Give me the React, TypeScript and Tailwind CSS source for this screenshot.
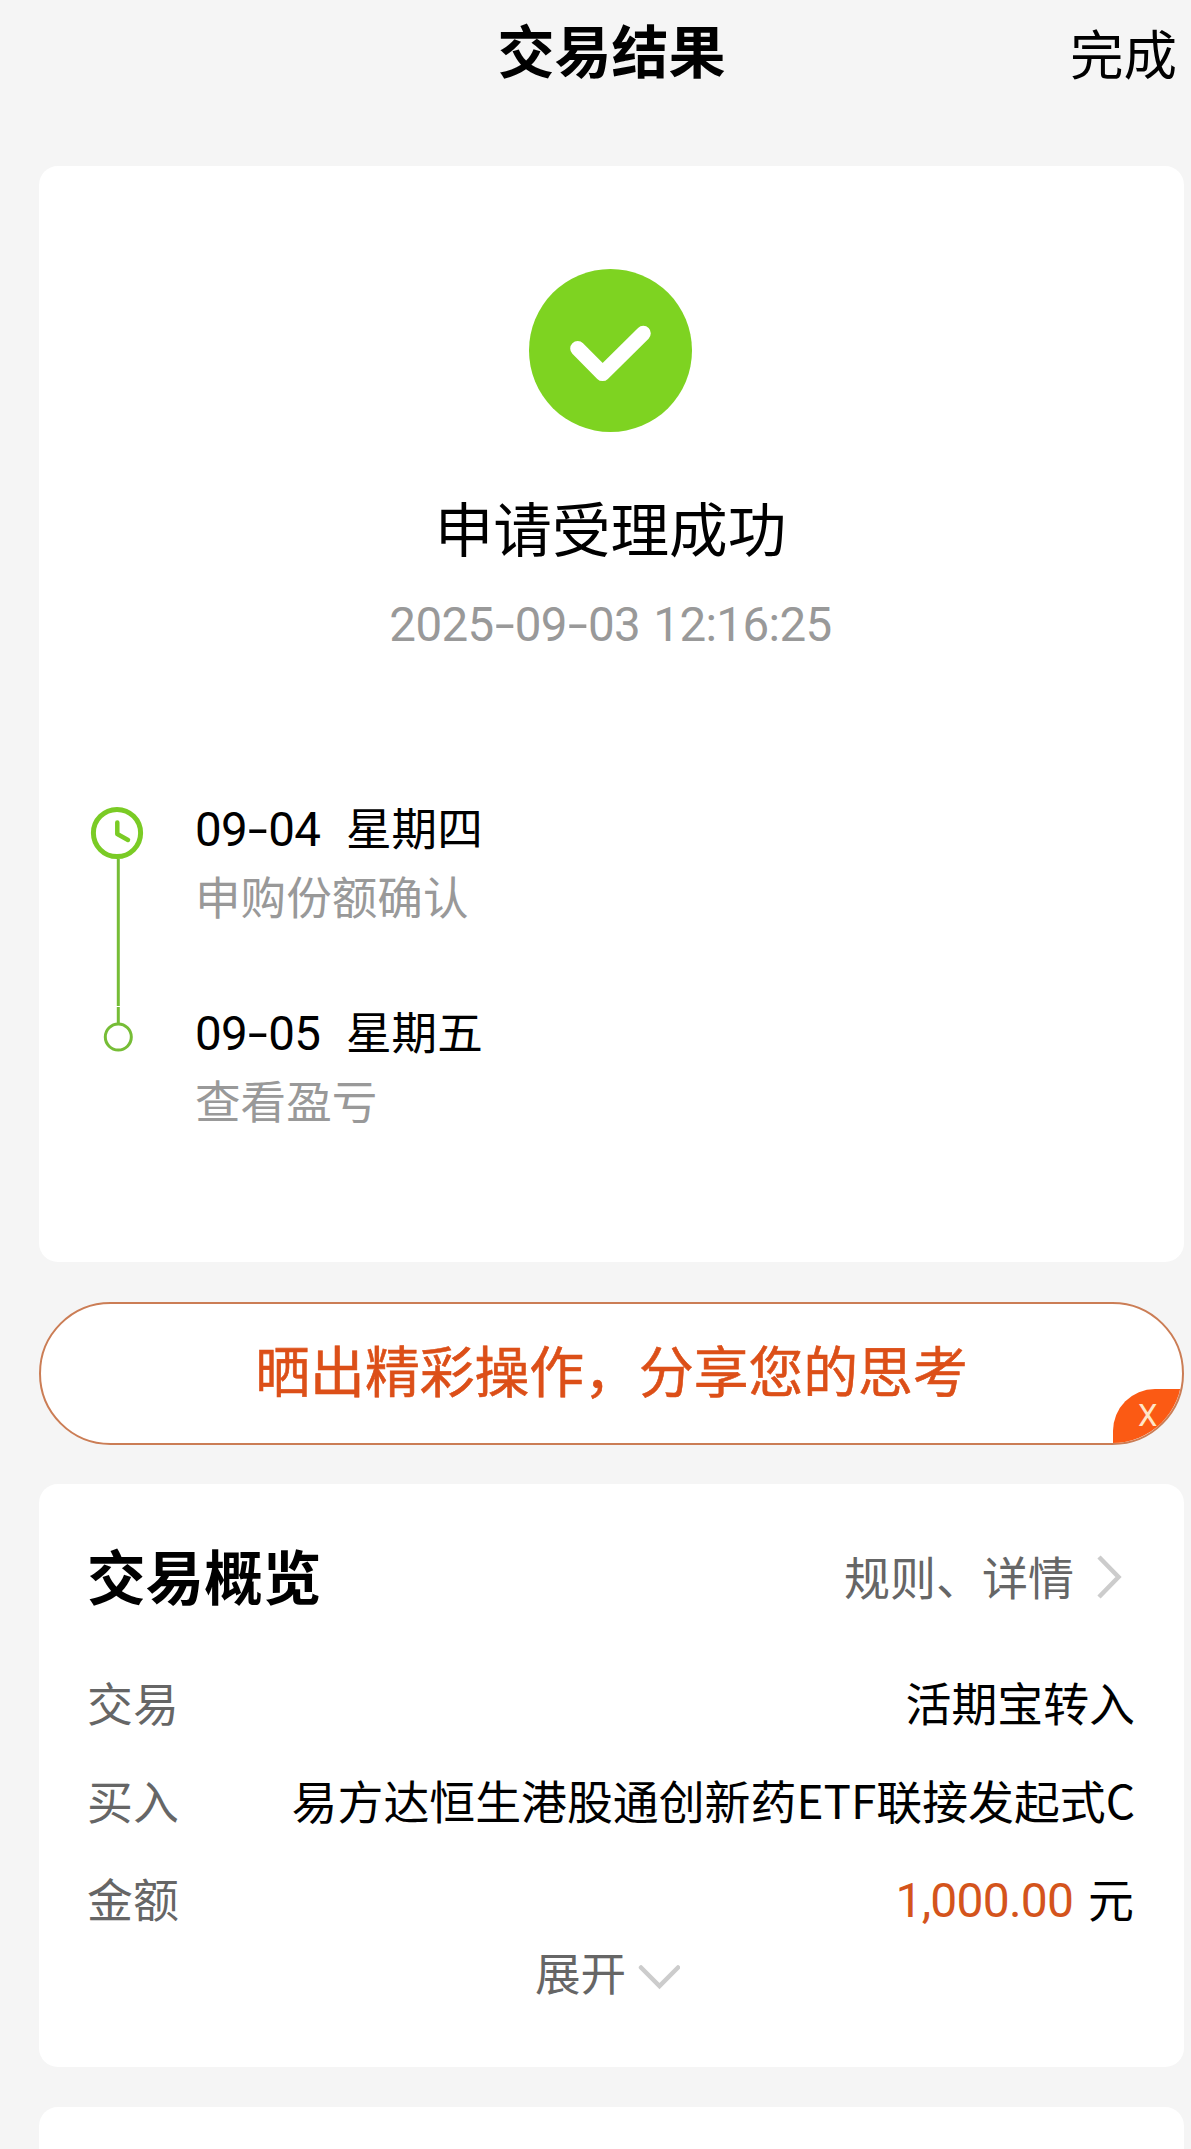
import { Fragment } from "react";

interface TimelineItem {
  date: string;
  weekday: string;
  note: string;
}

const timeline: TimelineItem[] = [
  { date: "09-04", weekday: "星期四", note: "申购份额确认" },
  { date: "09-05", weekday: "星期五", note: "查看盈亏" },
];

// Digits with wide hyphens between the parts
function DateText({ value }: { value: string }) {
  return (
    <span className="font-[Roboto] text-[47.5px] tracking-[-0.6px] whitespace-nowrap">
      {value.split("-").map((part, i) => (
        <Fragment key={i}>
          {i > 0 && <span className="inline-block w-[21px] scale-x-150 text-center">-</span>}
          {part}
        </Fragment>
      ))}
    </span>
  );
}

function SuccessIcon() {
  return (
    <svg className="h-[163px] w-[163px]" viewBox="0 0 163 163" fill="none">
      <circle cx="81.5" cy="81.5" r="81.5" fill="#7ed321" />
      <path
        d="M48.7 79.5 L73.6 104.6 L114.3 64.3"
        stroke="#fff"
        strokeWidth="15"
        strokeLinecap="round"
        strokeLinejoin="round"
      />
    </svg>
  );
}

function TimelineRail() {
  return (
    <svg className="mt-[10px] h-[246px] w-[54px] shrink-0" viewBox="0 0 54 246" fill="none">
      <circle cx="27" cy="27" r="23.6" stroke="#7acb25" strokeWidth="5" />
      <path
        d="M27.3 16.5 V28 L38 34"
        stroke="#7acb25"
        strokeWidth="4.5"
        strokeLinecap="round"
        strokeLinejoin="round"
      />
      <path d="M28.3 53 V200 M28.3 201 V218" stroke="#76bd36" strokeWidth="3" />
      <circle cx="28.3" cy="231" r="13" stroke="#76bd36" strokeWidth="3" />
    </svg>
  );
}

function Header() {
  return (
    <header className="grid h-[166px] grid-cols-[1fr_auto_1fr] items-start">
      <span />
      <h1 className="mt-[8px] text-[57px] leading-[80px] font-bold">交易结果</h1>
      <button className="mt-[12px] mr-[7px] justify-self-end text-[53.5px] leading-[80px]">完成</button>
    </header>
  );
}

function ResultCard() {
  return (
    <section className="flex h-[1096px] flex-col rounded-[19px] bg-white pt-[103px]">
      <div className="flex flex-col items-center pr-[2px]">
        <SuccessIcon />
        <h2 className="mt-[55px] text-[58.6px] leading-[80px]">申请受理成功</h2>
        <p className="mt-[30px] h-[56px] font-[Roboto] text-[47.5px] leading-[56px] text-[#999] [word-spacing:2px]">
          <DateText value="2025-09-03 12:16:25" />
        </p>
      </div>

      <div className="mt-[143px] flex pl-[51px]">
        <TimelineRail />
        <ul className="ml-[51px] flex flex-col gap-[75px]">
          {timeline.map((item) => (
            <li key={item.date} className="text-[45.6px] leading-[60px]">
              <div className="flex h-[60px] items-baseline">
                <span className="w-[151px]">
                  <DateText value={item.date} />
                </span>
                <span>{item.weekday}</span>
              </div>
              <p className="mt-[9px] text-[#999]">{item.note}</p>
            </li>
          ))}
        </ul>
      </div>
    </section>
  );
}

function ShareButton() {
  return (
    <div className="relative mt-[40px] flex h-[143px] items-center justify-center overflow-hidden rounded-full border-2 border-[#cb7d55] bg-white">
      <span className="-mt-[11px] text-[54.8px] leading-[80px] text-[#dc4f18] [-webkit-text-stroke:0.6px]">
        晒出精彩操作，分享您的思考
      </span>
      <button className="absolute right-0 bottom-0 h-[54px] w-[69px] rounded-tl-[42px] bg-[#fb5a14] pl-[25px] text-left font-[Roboto] text-[31px] leading-[52px] text-[#ffe6c8]">
        X
      </button>
    </div>
  );
}

function OverviewCard() {
  return (
    <section className="mt-[39px] h-[583px] rounded-[19px] bg-white pt-[51px] pr-[49px] pl-[48px]">
      <div className="flex items-center justify-between">
        <h2 className="text-[58.6px] leading-[80px] font-bold">交易概览</h2>
        <div className="mr-[11px] flex items-center text-[#666]">
          <span className="-mt-px text-[46px] leading-[80px]">规则、详情</span>
          <svg className="mt-[4px] ml-[22px] h-[44px] w-[28px]" viewBox="0 0 28 44" fill="none">
            <path d="M3 2 L22.5 22 L3 42" stroke="#ccc" strokeWidth="4.5" />
          </svg>
        </div>
      </div>

      <dl className="mt-[56px] flex flex-col gap-[38px] text-[45.9px] leading-[60px]">
        <div className="flex h-[60px] justify-between">
          <dt className="text-[#666]">交易</dt>
          <dd>活期宝转入</dd>
        </div>
        <div className="flex h-[60px] justify-between">
          <dt className="text-[#666]">买入</dt>
          <dd>易方达恒生港股通创新药ETF联接发起式C</dd>
        </div>
        <div className="flex h-[60px] justify-between">
          <dt className="text-[#666]">金额</dt>
          <dd className="mr-px flex items-baseline">
            <span className="mr-[15px] font-[Roboto] text-[48px] tracking-[-0.8px] text-[#d4541c]">1,000.00</span>
            <span>元</span>
          </dd>
        </div>
      </dl>

      <button className="mx-auto mt-[14px] flex items-center pr-[7px] text-[#666]">
        <span className="text-[45.6px] leading-[60px]">展开</span>
        <svg className="mt-[11px] ml-[12px] h-[26px] w-[42px]" viewBox="0 0 42 26" fill="none">
          <path d="M3 3.5 L21.5 22 L40 3.5" stroke="#ccc" strokeWidth="4.5" strokeLinecap="round" />
        </svg>
      </button>
    </section>
  );
}

export default function App() {
  return (
    <div className="h-[2149px] w-[1191px] overflow-hidden bg-[#f5f5f5] pr-[7px] pl-[39px] font-['Noto_Sans_CJK_SC',sans-serif] text-black">
      <Header />
      <ResultCard />
      <ShareButton />
      <OverviewCard />
      <section className="mt-[40px] h-[80px] rounded-[19px] bg-white" />
    </div>
  );
}
